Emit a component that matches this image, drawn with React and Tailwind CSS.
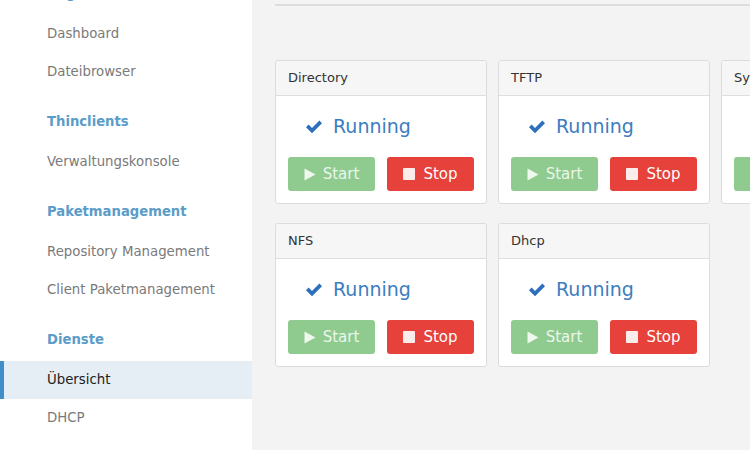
import React from "react";

const font = { fontFamily: '"DejaVu Sans", Verdana, sans-serif' };

function Header({ children }) {
  return (
    <div className="h-[52px] pt-[20px] pl-[47px] text-[13.2px] leading-[22px] font-bold text-[#5b9cc8]">
      {children}
    </div>
  );
}

function Item({ children, active }) {
  if (active) {
    return (
      <div className="relative h-[38px] flex items-center pl-[47px] text-[13.3px] text-[#222] bg-[#e6eef5]">
        <div className="absolute left-0 top-0 bottom-0 w-[4px] bg-[#3f8fca]" />
        {children}
      </div>
    );
  }
  return (
    <div className="h-[38px] flex items-center pl-[47px] text-[13.3px] text-[#7a7a7a]">
      {children}
    </div>
  );
}

function Check() {
  return (
    <svg width="18" height="15" viewBox="0 0 18 15" className="shrink-0">
      <path d="M1 8.2 L3.6 5.6 L7 9 L14.4 1.6 L17 4.2 L7 14.2 Z" fill="#2c6fbf" />
    </svg>
  );
}

function Card({ title }) {
  return (
    <div className="w-[212px] h-[144px] shrink-0 bg-white border border-[#dcdcdc] rounded-[3px] overflow-hidden">
      <div className="h-[35px] bg-[#f6f6f6] border-b border-[#dedede] flex items-center pl-[12px] text-[13px] text-[#333]">
        {title}
      </div>
      <div className="h-[61px] flex items-center pl-[29px] gap-[10px]">
        <Check />
        <span className="text-[19px] text-[#3b7dbf]">Running</span>
      </div>
      <div className="flex gap-[12px] px-[12px]">
        <div className="flex-1 h-[34px] rounded-[3px] bg-[#8fcb8f] flex items-center justify-center gap-[7px] text-[15px] text-[#eaf6ea]">
          <svg width="12" height="13" viewBox="0 0 12 13">
            <path d="M0.5 0.5 L11.5 6.5 L0.5 12.5 Z" fill="#eef8ee" />
          </svg>
          <span>Start</span>
        </div>
        <div className="flex-1 h-[34px] rounded-[3px] bg-[#e6413a] flex items-center justify-center gap-[8px] text-[15px] text-white">
          <span className="w-[12px] h-[12px] bg-[#fbecec] rounded-[1px]" />
          <span>Stop</span>
        </div>
      </div>
    </div>
  );
}

export default function App() {
  return (
    <div className="w-[750px] h-[450px] overflow-hidden flex bg-[#f3f3f3]" style={font}>
      <div className="w-[252px] shrink-0 bg-white h-full overflow-hidden">
        <div className="-mt-[37px]">
          <Header>Allgemein</Header>
          <Item>Dashboard</Item>
          <Item>Dateibrowser</Item>
          <Header>Thinclients</Header>
          <Item>Verwaltungskonsole</Item>
          <Header>Paketmanagement</Header>
          <Item>Repository Management</Item>
          <Item>Client Paketmanagement</Item>
          <Header>Dienste</Header>
          <Item active>Übersicht</Item>
          <Item>DHCP</Item>
        </div>
      </div>
      <div className="flex-1 min-w-0 pl-[23px] overflow-hidden">
        <div className="h-[6px] border-b-2 border-[#dddddd]" />
        <div className="pt-[54px] flex flex-col gap-[19px]">
          <div className="flex gap-[11px]">
            <Card title="Directory" />
            <Card title="TFTP" />
            <Card title="Syslog" />
          </div>
          <div className="flex gap-[11px]">
            <Card title="NFS" />
            <Card title="Dhcp" />
          </div>
        </div>
      </div>
    </div>
  );
}
